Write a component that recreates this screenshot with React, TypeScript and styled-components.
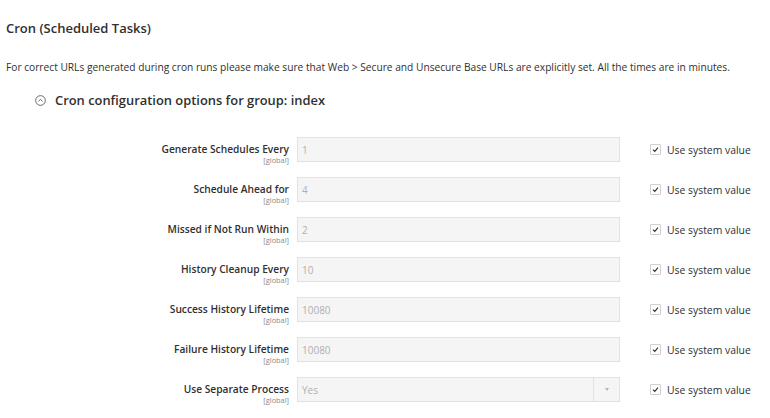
import React from "react";
import styled, { createGlobalStyle } from "styled-components";

const GlobalStyle = createGlobalStyle`
  body {
    margin: 0;
    background: #ffffff;
    font-family: "Open Sans", "Liberation Sans", sans-serif;
    color: #303030;
  }
`;

type Field = {
  label: string;
  value: string;
  select?: boolean;
};

const fields: Field[] = [
  { label: "Generate Schedules Every", value: "1" },
  { label: "Schedule Ahead for", value: "4" },
  { label: "Missed if Not Run Within", value: "2" },
  { label: "History Cleanup Every", value: "10" },
  { label: "Success History Lifetime", value: "10080" },
  { label: "Failure History Lifetime", value: "10080" },
  { label: "Use Separate Process", value: "Yes", select: true },
];

const App: React.FC = () => {
  return (
    <Page>
      <GlobalStyle />
      <Title>Cron (Scheduled Tasks)</Title>
      <Description>
        For correct URLs generated during cron runs please make sure that Web
        &gt; Secure and Unsecure Base URLs are explicitly set. All the times are
        in minutes.
      </Description>
      <GroupHeading>
        <CollapseIcon viewBox="0 0 10 10">
          <circle cx="5" cy="5" r="4.4" />
          <polyline points="3.1,5.8 5,4 6.9,5.8" />
        </CollapseIcon>
        Cron configuration options for group: index
      </GroupHeading>
      <Form>
        {fields.map((field) => (
          <Row key={field.label}>
            <Label>
              <LabelName>{field.label}</LabelName>
              <Scope>[global]</Scope>
            </Label>
            {field.select ? (
              <SelectBox>
                <Value>{field.value}</Value>
                <SelectArrow>
                  <span />
                </SelectArrow>
              </SelectBox>
            ) : (
              <InputBox>
                <Value>{field.value}</Value>
              </InputBox>
            )}
            <SystemValue>
              <Checkbox>
                <svg viewBox="0 0 10 10">
                  <polyline points="2.2,5.2 4.2,7 7.8,3" />
                </svg>
              </Checkbox>
              Use system value
            </SystemValue>
          </Row>
        ))}
      </Form>
    </Page>
  );
};

export default App;

// whole page
const Page = styled.div`
  width: 770px;
  height: 418px;
  overflow: hidden;
  padding-top: 19px;
  box-sizing: border-box;
`;

const Title = styled.h1`
  margin: 0 0 0 6px;
  font-size: 13px;
  line-height: 18px;
  font-weight: 600;
  color: #303030;
`;

const Description = styled.p`
  margin: 23px 0 0 6px;
  font-size: 10.2px;
  line-height: 14px;
  color: #303030;
  white-space: nowrap;
`;

const GroupHeading = styled.div`
  margin: 17px 0 0 35px;
  display: flex;
  align-items: center;
  gap: 9px;
  font-size: 12.9px;
  line-height: 18px;
  font-weight: 600;
  color: #303030;
`;

const CollapseIcon = styled.svg`
  width: 11px;
  height: 11px;
  fill: none;
  stroke: #555;
  stroke-width: 0.8;
`;

const Form = styled.div`
  margin-top: 28px;
  display: flex;
  flex-direction: column;
  gap: 15px;
`;

const Row = styled.div`
  display: grid;
  grid-template-columns: 289px 323px auto;
  grid-template-rows: 25px;
  column-gap: 8px;
  align-items: start;
`;

const Label = styled.div`
  display: flex;
  flex-direction: column;
  align-items: flex-end;
  padding-top: 5px;
  height: 25px;
  box-sizing: border-box;
  overflow: visible;
`;

const LabelName = styled.span`
  font-size: 10.2px;
  line-height: 14px;
  font-weight: 600;
  color: #303030;
`;

const Scope = styled.span`
  font-size: 7.4px;
  line-height: 9px;
  color: #8a8a8a;
`;

const InputBox = styled.div`
  height: 25px;
  box-sizing: border-box;
  border: 1px solid #e2e2e2;
  background: #f5f5f5;
  display: flex;
  align-items: center;
  padding-left: 4px;
`;

const SelectBox = styled(InputBox)`
  padding-left: 4px;
  justify-content: space-between;
`;

const Value = styled.span`
  font-size: 10px;
  color: #b0b0b0;
`;

const SelectArrow = styled.div`
  width: 25px;
  height: 100%;
  border-left: 1px solid #e2e2e2;
  display: flex;
  align-items: center;
  justify-content: center;

  span {
    width: 0;
    height: 0;
    border-left: 2.5px solid transparent;
    border-right: 2.5px solid transparent;
    border-top: 3px solid #b5b5b5;
  }
`;

const SystemValue = styled.label`
  margin-left: 22px;
  display: flex;
  align-items: center;
  gap: 6px;
  height: 25px;
  font-size: 10.4px;
  color: #303030;
`;

const Checkbox = styled.span`
  width: 11px;
  height: 11px;
  box-sizing: border-box;
  border: 1px solid #cfcfcf;
  border-radius: 1px;
  display: flex;
  align-items: center;
  justify-content: center;

  svg {
    width: 9px;
    height: 9px;
    fill: none;
    stroke: #333;
    stroke-width: 1.3;
  }
`;
